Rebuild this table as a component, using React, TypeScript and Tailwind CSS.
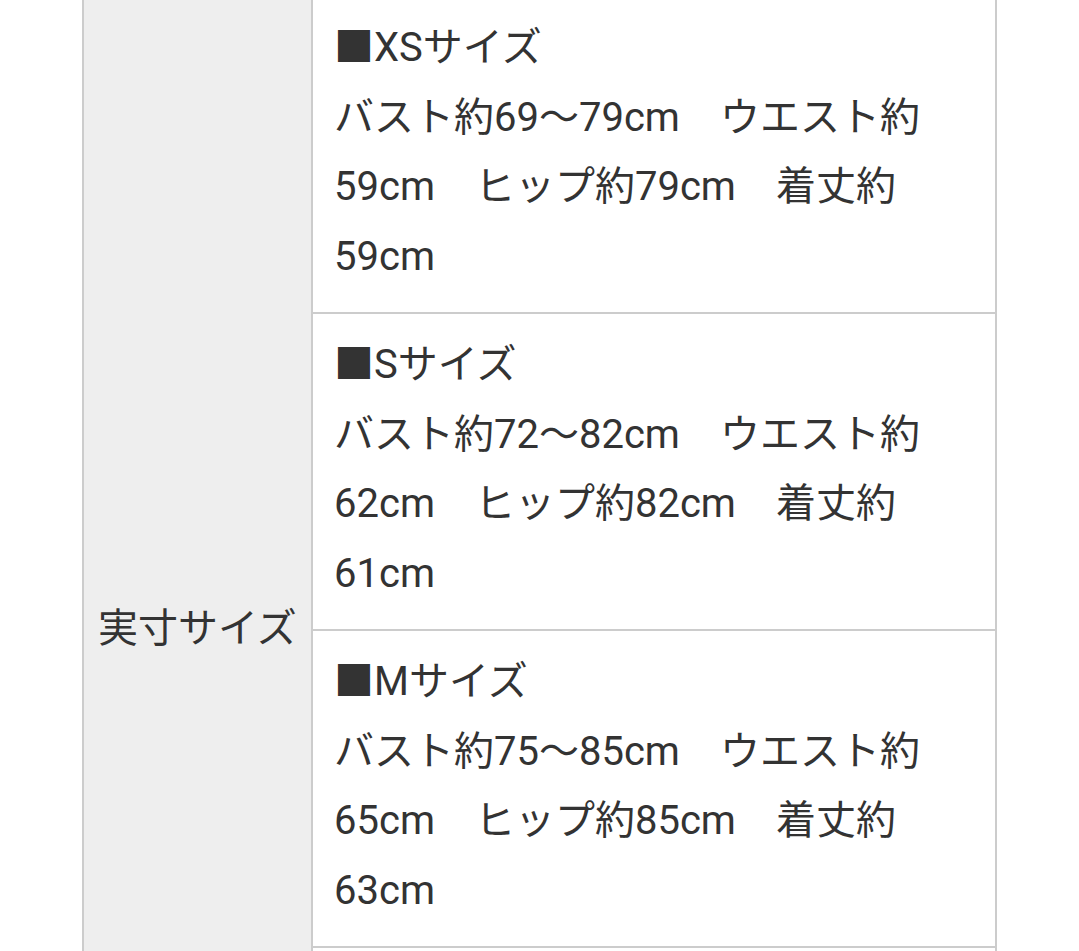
import React from "react";

const rows = [
  {
    title: "■XSサイズ",
    lines: ["バスト約69～79cm　ウエスト約", "59cm　ヒップ約79cm　着丈約", "59cm"],
  },
  {
    title: "■Sサイズ",
    lines: ["バスト約72～82cm　ウエスト約", "62cm　ヒップ約82cm　着丈約", "61cm"],
  },
  {
    title: "■Mサイズ",
    lines: ["バスト約75～85cm　ウエスト約", "65cm　ヒップ約85cm　着丈約", "63cm"],
  },
];

export default function App() {
  return (
    <div
      className="h-[951px] w-[1079px] overflow-hidden bg-white text-[#333333]"
      style={{ fontFamily: 'Roboto, "Noto Sans CJK JP", sans-serif' }}
    >
      <div className="ml-[82px] mt-[-5px] flex w-[915px] border-l-2 border-r-2 border-[#cccccc]">
        <div className="flex w-[227px] shrink-0 items-center bg-[#eeeeee] pl-[14px] text-[40px] leading-[69.5px]">
          実寸サイズ
        </div>
        <div className="flex flex-1 flex-col border-l-2 border-[#cccccc]">
          {rows.map((r) => (
            <div
              key={r.title}
              className="border-t-2 border-[#cccccc] pb-[21px] pl-[21px] pt-[16px] text-[40px] leading-[69.5px]"
            >
              <div className="whitespace-nowrap">{r.title}</div>
              {r.lines.map((l, i) => (
                <div key={i} className="whitespace-nowrap">
                  {l}
                </div>
              ))}
            </div>
          ))}
          <div className="h-[317px] border-t-2 border-[#cccccc]" />
        </div>
      </div>
    </div>
  );
}
